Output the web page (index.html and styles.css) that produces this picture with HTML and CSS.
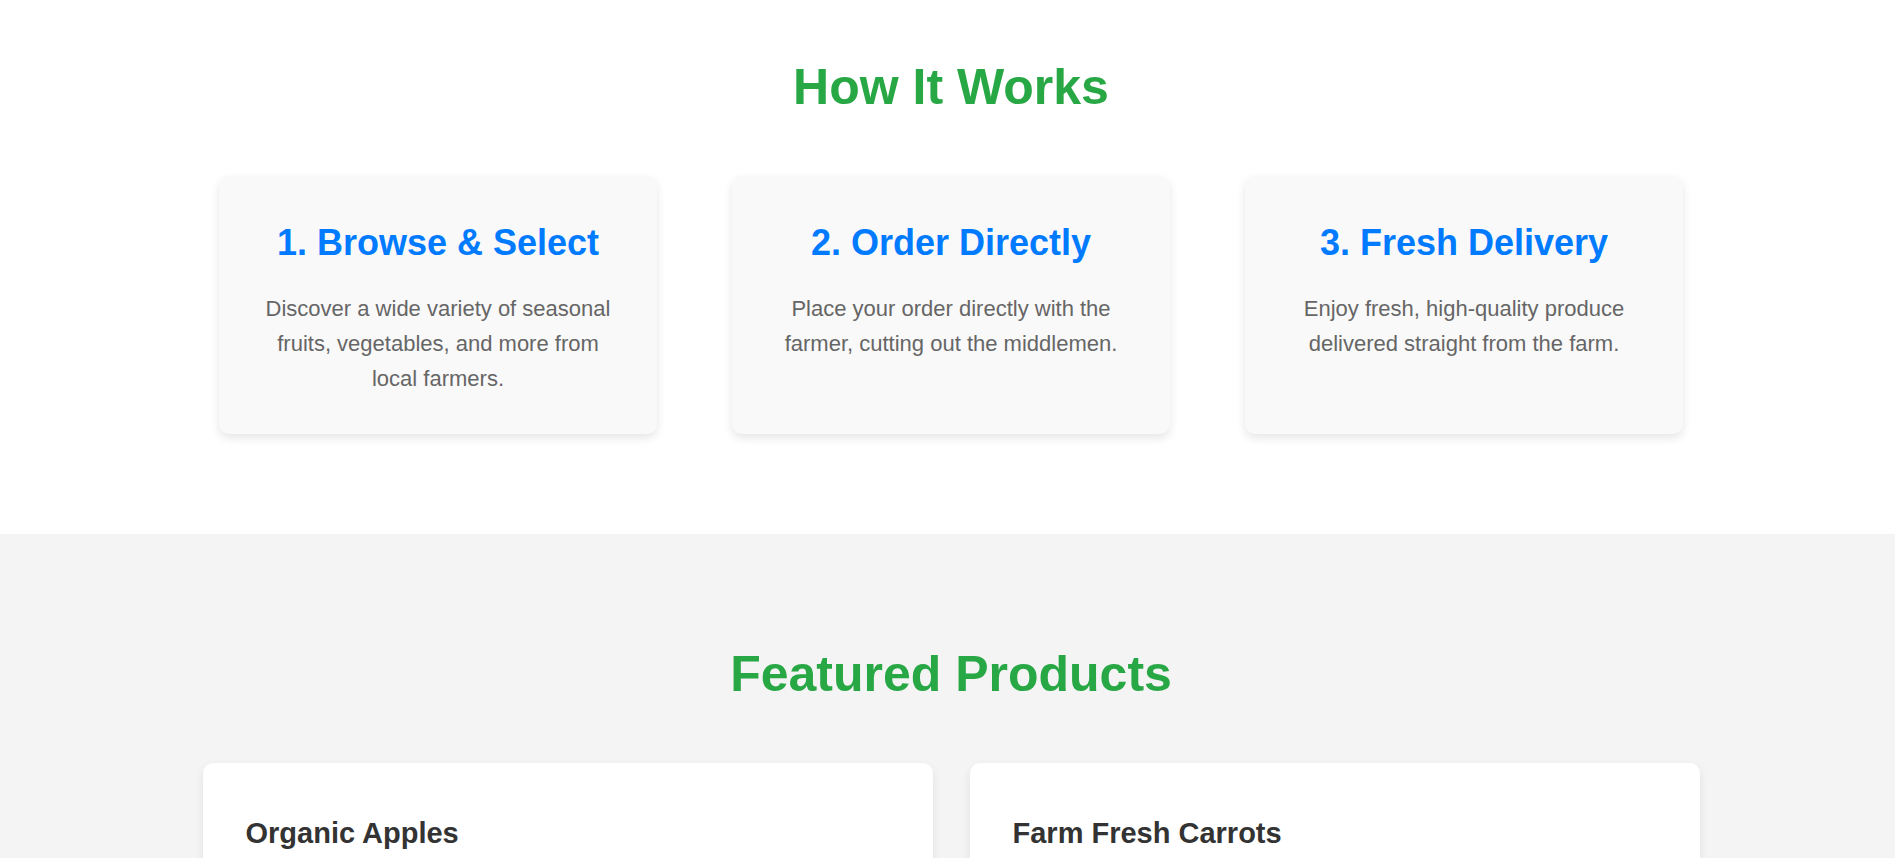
FILE: index.html
```html
<!DOCTYPE html>
<html lang="en">
<head>
<meta charset="utf-8">
<title>Farm Fresh</title>
<link rel="stylesheet" href="styles.css">
</head>
<body>
<section class="how">
  <div class="inner">
    <h2 class="section-title">How It Works</h2>
    <div class="steps">
      <div class="step">
        <h3>1. Browse &amp; Select</h3>
        <p>Discover a wide variety of seasonal fruits, vegetables, and more from local farmers.</p>
      </div>
      <div class="step">
        <h3>2. Order Directly</h3>
        <p>Place your order directly with the farmer, cutting out the middlemen.</p>
      </div>
      <div class="step">
        <h3>3. Fresh Delivery</h3>
        <p>Enjoy fresh, high-quality produce delivered straight from the farm.</p>
      </div>
    </div>
  </div>
</section>
<section class="featured">
  <div class="inner">
    <h2 class="section-title">Featured Products</h2>
    <div class="products">
      <div class="product">
        <h3>Organic Apples</h3>
        <p>Crisp, juicy apples picked fresh from the orchard.</p>
        <span class="price">$4.99 / lb</span>
      </div>
      <div class="product">
        <h3>Farm Fresh Carrots</h3>
        <p>Sweet, crunchy carrots grown in rich local soil.</p>
        <span class="price">$2.49 / bunch</span>
      </div>
    </div>
  </div>
</section>
</body>
</html>
```
FILE: styles.css
```css
body {
  margin: 0;
  font-family: "Liberation Sans", Arial, sans-serif;
  background: #ffffff;
  color: #333333;
}

.inner {
  padding-left: 7px;
}

.section-title {
  margin: 0 0 60px;
  font-size: 50px;
  line-height: 57px;
  font-weight: bold;
  color: #28a745;
  text-align: center;
}

.how {
  padding: 59px 0 100px;
  background: #ffffff;
}

.steps {
  display: flex;
  justify-content: center;
  gap: 75px;
}

.step {
  width: 438px;
  box-sizing: border-box;
  padding: 46px 40px 37px;
  background: #f9f9f9;
  border-radius: 10px;
  box-shadow: 0 4px 10px rgba(0, 0, 0, 0.1);
  text-align: center;
}

.step h3 {
  margin: 0 0 28px;
  font-size: 36px;
  line-height: 41px;
  color: #007bff;
}

.step p {
  margin: 0;
  font-size: 22px;
  line-height: 35.2px;
  color: #666666;
}

.featured {
  padding: 112px 0 60px;
  background: #f4f4f4;
}

.products {
  display: grid;
  grid-template-columns: 730px 730px;
  justify-content: center;
  gap: 37px;
}

.product {
  background: #ffffff;
  border-radius: 10px;
  padding: 54px 43px 49px;
  box-shadow: 0 4px 10px rgba(0, 0, 0, 0.08);
}

.product h3 {
  margin: 0 0 16px;
  font-size: 29px;
  line-height: 33px;
  color: #333333;
}

.product p {
  margin: 0 0 16px;
  font-size: 20px;
  line-height: 1.6;
  color: #666666;
}

.price {
  font-size: 22px;
  font-weight: bold;
  color: #28a745;
}
```
